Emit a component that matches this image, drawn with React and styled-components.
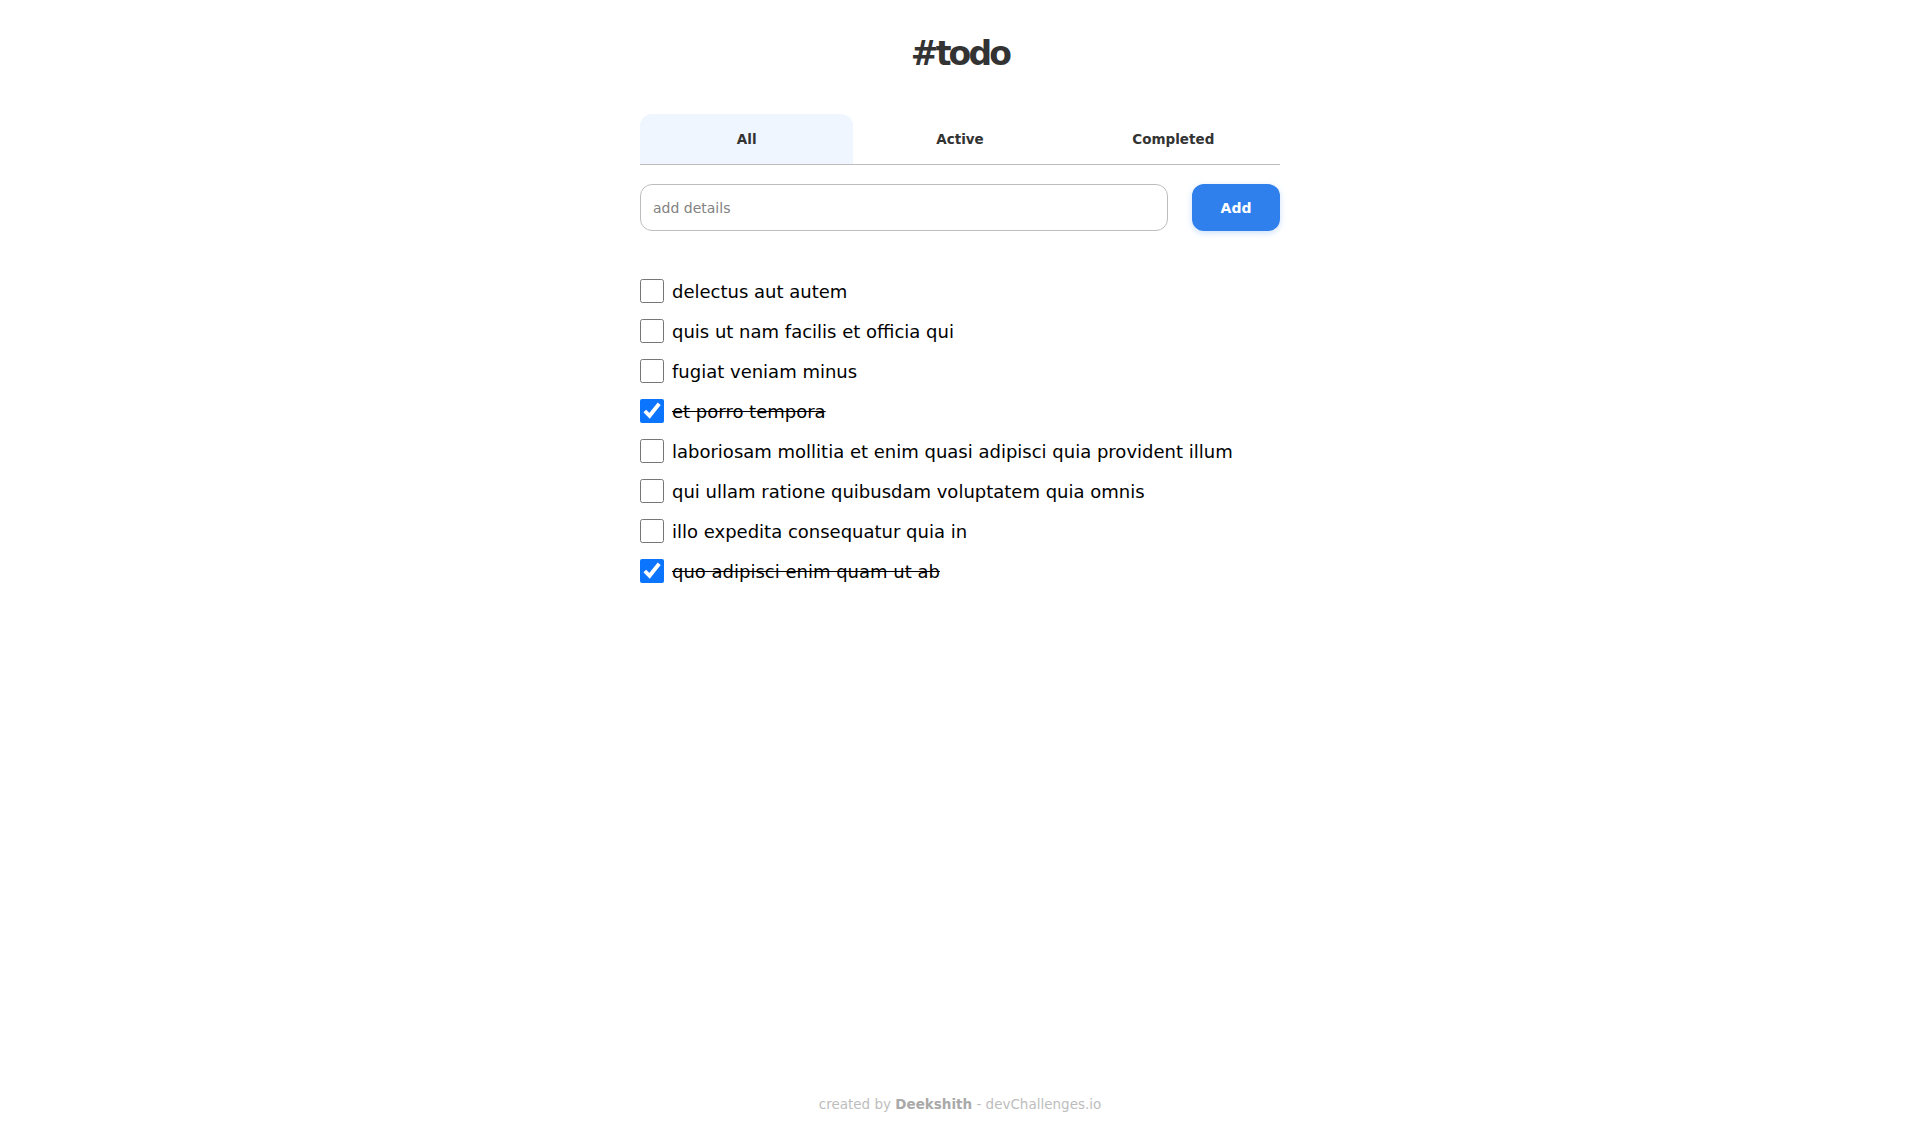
import React, { useState } from "react";
import styled, { createGlobalStyle } from "styled-components";

const Global = createGlobalStyle`
  * { box-sizing: border-box; }
  body {
    margin: 0;
    background: #ffffff;
    font-family: "DejaVu Sans", "Noto Sans", sans-serif;
    color: #000;
  }
`;

const Page = styled.div`
  min-height: 100vh;
  display: flex;
  flex-direction: column;
  align-items: center;
`;

const Main = styled.main`
  width: 640px;
  display: flex;
  flex-direction: column;
`;

const Title = styled.h1`
  margin: 32px 0 0;
  height: 44px;
  line-height: 44px;
  text-align: center;
  font-size: 33px;
  font-weight: 700;
  letter-spacing: -2.8px;
  color: #333333;
`;

const Tabs = styled.nav`
  margin-top: 38px;
  display: grid;
  grid-template-columns: repeat(3, 1fr);
  border-bottom: 1px solid #bdbdbd;
`;

const Tab = styled.button`
  height: 50px;
  border: none;
  border-radius: 12px 12px 0 0;
  background: ${(p) => (p.$active ? "#eff6ff" : "transparent")};
  font-family: inherit;
  font-size: 13.5px;
  font-weight: 600;
  color: #333333;
  cursor: pointer;
`;

const Form = styled.form`
  margin-top: 19px;
  display: flex;
  gap: 24px;
`;

const Input = styled.input`
  flex: 1;
  height: 47px;
  border: 1px solid #bdbdbd;
  border-radius: 12px;
  padding: 0 12px;
  font-family: inherit;
  font-size: 14px;
  color: #333;
  outline: none;
  &::placeholder { color: #828282; }
`;

const AddButton = styled.button`
  width: 88px;
  height: 47px;
  border: none;
  border-radius: 12px;
  background: #2f80ed;
  color: #fff;
  font-family: inherit;
  font-size: 14px;
  font-weight: 700;
  box-shadow: 0 2px 6px rgba(127, 177, 243, 0.4);
  cursor: pointer;
`;

const List = styled.ul`
  list-style: none;
  margin: 40px 0 0;
  padding: 0;
  display: flex;
  flex-direction: column;
`;

const Item = styled.li`
  height: 40px;
  display: flex;
  align-items: center;
  gap: 8px;
`;

const Check = styled.input`
  width: 24px;
  height: 24px;
  margin: 0;
  flex: none;
  accent-color: #0b75ff;
`;

const Label = styled.span`
  font-size: 18px;
  font-weight: 500;
  color: #000;
  text-decoration: ${(p) => (p.$done ? "line-through" : "none")};
`;

const Footer = styled.footer`
  margin-top: auto;
  padding-bottom: 32px;
  font-size: 13.5px;
  color: #bdbdbd;
  font-weight: 500;
  b { color: #a9a9a9; font-weight: 700; }
`;

const initial = [
  { text: "delectus aut autem", done: false },
  { text: "quis ut nam facilis et officia qui", done: false },
  { text: "fugiat veniam minus", done: false },
  { text: "et porro tempora", done: true },
  { text: "laboriosam mollitia et enim quasi adipisci quia provident illum", done: false },
  { text: "qui ullam ratione quibusdam voluptatem quia omnis", done: false },
  { text: "illo expedita consequatur quia in", done: false },
  { text: "quo adipisci enim quam ut ab", done: true },
];

export default function App() {
  const [todos, setTodos] = useState(initial);
  const [tab, setTab] = useState("All");
  const toggle = (i) =>
    setTodos((t) => t.map((x, j) => (j === i ? { ...x, done: !x.done } : x)));
  return (
    <Page>
      <Global />
      <Main>
        <Title>#todo</Title>
        <Tabs>
          {["All", "Active", "Completed"].map((t) => (
            <Tab key={t} $active={tab === t} onClick={() => setTab(t)}>
              {t}
            </Tab>
          ))}
        </Tabs>
        <Form onSubmit={(e) => e.preventDefault()}>
          <Input placeholder="add details" />
          <AddButton type="submit">Add</AddButton>
        </Form>
        <List>
          {todos.map((t, i) => (
            <Item key={i}>
              <Check type="checkbox" checked={t.done} onChange={() => toggle(i)} />
              <Label $done={t.done}>{t.text}</Label>
            </Item>
          ))}
        </List>
      </Main>
      <Footer>
        created by <b>Deekshith</b> - devChallenges.io
      </Footer>
    </Page>
  );
}
